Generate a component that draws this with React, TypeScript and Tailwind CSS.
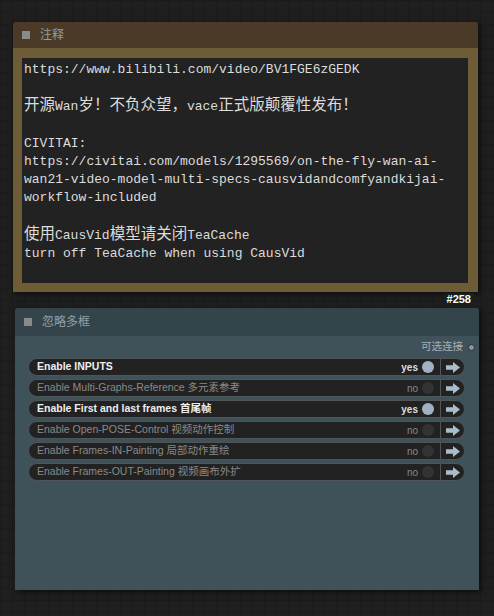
import React from "react";

const cjk = "text-[15.5px]";

const rows = [
  { label: "Enable INPUTS", on: true },
  { label: "Enable Multi-Graphs-Reference 多元素参考", on: false },
  { label: "Enable First and last frames 首尾帧", on: true },
  { label: "Enable Open-POSE-Control 视频动作控制", on: false },
  { label: "Enable Frames-IN-Painting 局部动作重绘", on: false },
  { label: "Enable Frames-OUT-Painting 视频画布外扩", on: false },
];

const Arrow: React.FC = () => (
  <svg width="14" height="11" viewBox="0 0 14 11">
    <path d="M0 3.2 H7 V0 L14 5.5 L7 11 V7.8 H0 Z" fill="#a9bccb" />
  </svg>
);

const ToggleRow: React.FC<{ label: string; on: boolean }> = ({ label, on }) => (
  <div className="flex items-center h-[18px] rounded-full bg-[#222222] border border-[#4d5559]">
    <div
      className={`flex-1 pl-[8px] truncate text-[10.5px] ${
        on ? "font-bold text-[#eeeeee]" : "text-[#8a8a8a]"
      }`}
    >
      {label}
    </div>
    <span className={`text-[10px] ${on ? "font-bold text-[#dddddd]" : "text-[#888888]"}`}>
      {on ? "yes" : "no"}
    </span>
    <span
      className={`ml-[4px] w-[12px] h-[12px] rounded-full ${on ? "bg-[#9fb1c3]" : "bg-[#333333]"}`}
    />
    <span className="ml-[6px] w-px h-full bg-[#555555]" />
    <span className="ml-[5px] mr-[4px] flex items-center">
      <Arrow />
    </span>
  </div>
);

export default function App() {
  return (
    <div
      className="w-[494px] h-[616px] overflow-hidden bg-[#1f1f1f] bg-[linear-gradient(to_right,#1b1b1b_1px,transparent_1px),linear-gradient(to_bottom,#1b1b1b_1px,transparent_1px)] bg-[size:12px_12px] pt-[22px]"
      style={{ fontFamily: '"Liberation Sans", "Noto Sans CJK SC", sans-serif' }}
    >
      {/* note node */}
      <div className="ml-[13px] w-[465px] shadow-[2px_2px_6px_rgba(0,0,0,0.6)]">
        <div className="h-[26px] bg-[#4a3a27] rounded-t-[3px] flex items-center pl-[9px]">
          <span className="w-[8px] h-[8px] bg-[#8a8a8a]" />
          <span className="ml-[10px] text-[12px] text-[#9a9a9a]">注释</span>
        </div>
        <div className="bg-[#6e5c37] pt-[10px] pl-[9px] pr-[10px] pb-[9px]">
          <div
            className="h-[225px] bg-[#222222] pt-[3px] pl-[2px] text-[13px] leading-[18.2px] text-[#dcdcdc]"
            style={{ fontFamily: '"Liberation Mono", "Noto Sans CJK SC", monospace' }}
          >
            <div>https://www.bilibili.com/video/BV1FGE6zGEDK</div>
            <div>&nbsp;</div>
            <div>
              <span className={cjk}>开源</span>Wan<span className={cjk}>岁！不负众望，</span>vace
              <span className={cjk}>正式版颠覆性发布！</span>
            </div>
            <div>&nbsp;</div>
            <div>CIVITAI:</div>
            <div>https://civitai.com/models/1295569/on-the-fly-wan-ai-</div>
            <div>wan21-video-model-multi-specs-causvidandcomfyandkijai-</div>
            <div>workflow-included</div>
            <div>&nbsp;</div>
            <div>
              <span className={cjk}>使用</span>CausVid<span className={cjk}>模型请关闭</span>TeaCache
            </div>
            <div>turn off TeaCache when using CausVid</div>
          </div>
        </div>
      </div>

      {/* id badge */}
      <div className="w-[474px] flex justify-end mt-[1px]">
        <span className="h-[13px] px-[3px] bg-[#17211a] text-[11px] leading-[13px] font-bold text-white">
          #258
        </span>
      </div>

      {/* bypass node */}
      <div className="ml-[15px] mt-[2px] w-[464px] shadow-[2px_2px_6px_rgba(0,0,0,0.6)]">
        <div className="h-[28px] bg-[#33444b] rounded-t-[3px] flex items-center pl-[9px]">
          <span className="w-[8px] h-[8px] bg-[#8a8a8a]" />
          <span className="ml-[10px] text-[12px] text-[#9aa0a3]">忽略多框</span>
        </div>
        <div className="h-[254px] bg-[#405259] pl-[13px] pr-[14px] pt-[5px]">
          <div className="flex items-center justify-end h-[12px] -mr-[10px]">
            <span className="text-[10.5px] text-[#a8b0b4]">可选连接</span>
            <span className="ml-[5px] w-[7px] h-[7px] rounded-full bg-[#8a92a8] border border-[#2a2f36]" />
          </div>
          <div className="mt-[5px] flex flex-col gap-[3px]">
            {rows.map((r) => (
              <ToggleRow key={r.label} label={r.label} on={r.on} />
            ))}
          </div>
        </div>
      </div>
    </div>
  );
}
